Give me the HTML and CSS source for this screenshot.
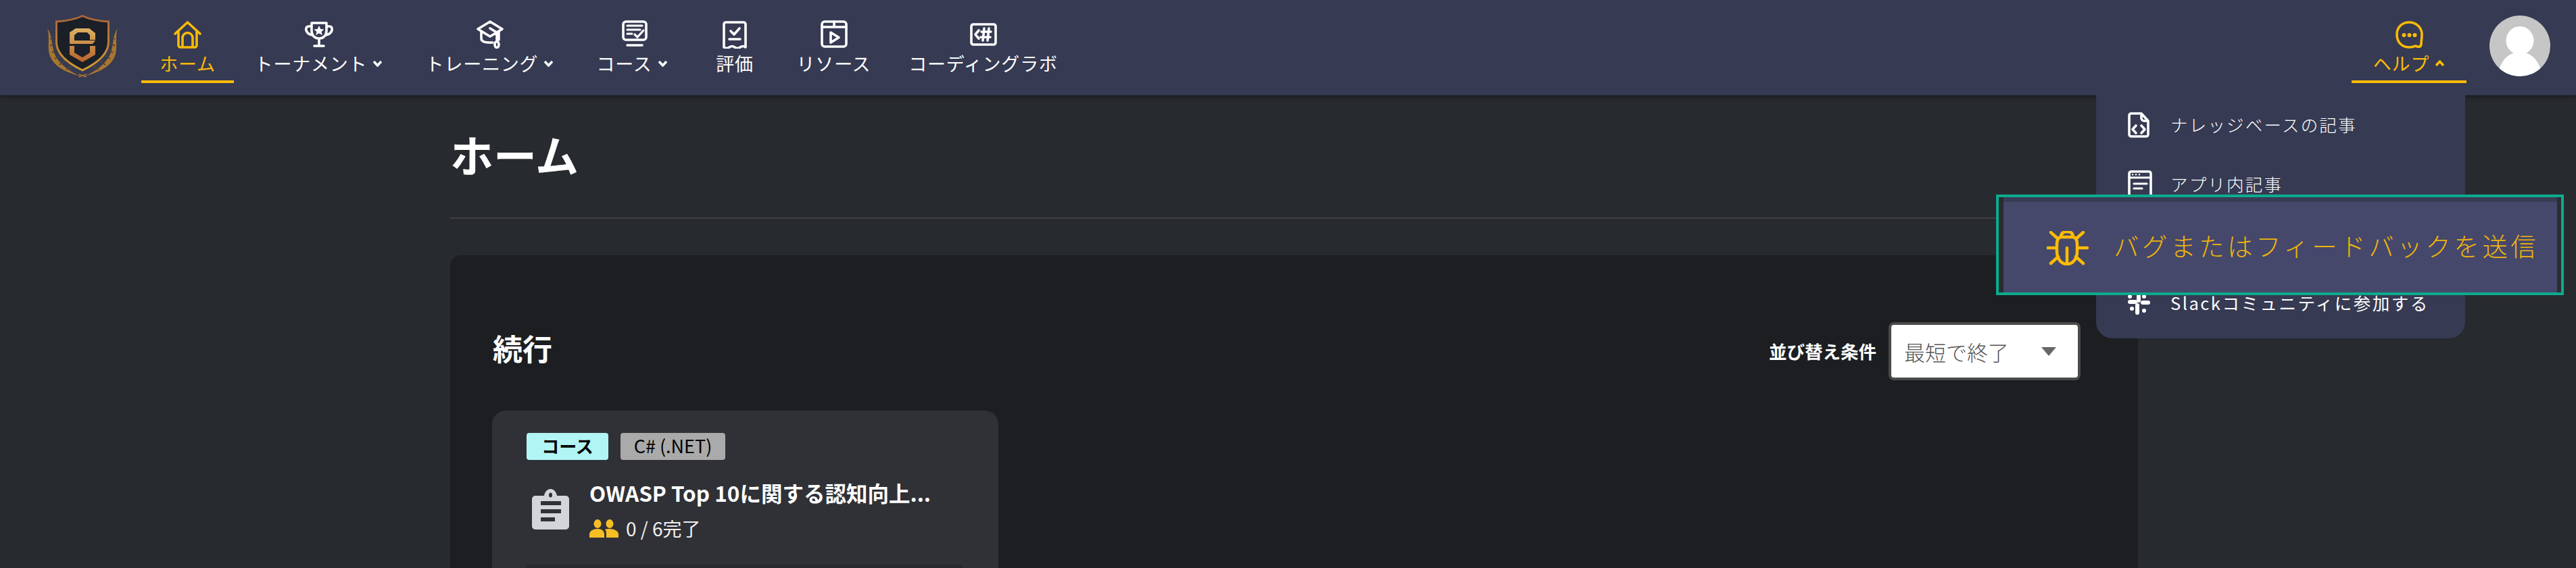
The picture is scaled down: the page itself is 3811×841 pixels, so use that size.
FILE: index.html
```html
<!DOCTYPE html>
<html lang="ja">
<head>
<meta charset="utf-8">
<title>ホーム</title>
<link rel="stylesheet" href="styles.css">
</head>
<body>
<header class="topbar">
  <svg class="logo" width="106" height="94" viewBox="0 0 106 94" fill="none">
    <defs>
      <linearGradient id="gold" x1="0" y1="0" x2="0" y2="1"><stop offset="0" stop-color="#dcb060"/><stop offset="1" stop-color="#b8642c"/></linearGradient>
      <linearGradient id="rim" x1="0" y1="0" x2="0" y2="1"><stop offset="0" stop-color="#a8643a"/><stop offset="1" stop-color="#d09a30"/></linearGradient>
    </defs>
    <path d="M14.500 10 C28 9 44 6 53 1.500 C62 6 78 9 91.500 10 V40 C91.500 58 74 72 53 82 C32 72 14.500 58 14.500 40 Z" fill="#1b1f28" stroke="url(#rim)" stroke-width="3"/>
    <path d="M34 43 V26 L43 20 H63 L72 27 V37 H64 V30 L60 26 H46 L41 30 V38 H72 L68 43 Z M34 46 H41 V56 L53 63 L64 56 V46 H72 V59 L53 70 L34 59 Z" fill="url(#gold)"/>
    <path d="M1 20 C8 30 7 40 10 52 C13 66 26 80 50 91 C28 85 9 76 4 58 C1 46 5 32 1 20 Z" fill="#a8752f"/>
    <path d="M105 20 C98 30 99 40 96 52 C93 66 80 80 56 91 C78 85 97 76 102 58 C105 46 101 32 105 20 Z" fill="#a8752f"/>
    <path d="M5 36 L10 33 M5 46 L12 42 M8 56 L15 51 M12 65 L20 60 M19 74 L27 68 M29 81 L37 76 M101 36 L96 33 M101 46 L94 42 M98 56 L91 51 M94 65 L86 60 M87 74 L79 68 M77 81 L69 76" stroke="#4f4438" stroke-width="1.800"/>
    <path d="M47 92 L59 88 M59 92 L47 88" stroke="#a8752f" stroke-width="1.500"/>
  </svg>
  <nav class="nav">
    <a class="nav-item active nav-home">
      <svg class="ico" width="41" height="41" viewBox="0 0 41 41"><path d="M2 19 L20.500 2 L39 19 M7 15 V36 a3 3 0 0 0 3 3 H31 a3 3 0 0 0 3-3 V15 M13 39 V25 a7.500 7.500 0 0 1 15 0 V39"/></svg>
      <span class="nav-label">ホーム</span>
    </a>
    <a class="nav-item nav-tour">
      <svg class="ico" width="42" height="38" viewBox="0 0 42 38"><path d="M10 2 H32 V13 C32 21 27 25 21 25 C15 25 10 21 10 13 Z M10 7 H6 C2 7 1.500 10 2 13 C3 17 7 19 11 20 M32 7 H36 C40 7 40.500 10 40 13 C39 17 35 19 31 20 M21 25 V36 M14 36 H28"/><polygon class="fill" points="21,6 23.300,11 28.500,11.500 24.500,15 25.800,20 21,17.300 16.200,20 17.500,15 13.500,11.500 18.700,11"/></svg>
      <span class="nav-label">トーナメント<svg class="chev" width="15" height="10" viewBox="0 0 15 10"><path d="M2 2 L7.500 8 L13 2"/></svg></span>
    </a>
    <a class="nav-item nav-train">
      <svg class="ico" width="40" height="42" viewBox="0 0 40 42"><path d="M20 2 L38 13 L20 24 L2 13 Z M7 17 V27 C7 31 12 33 20 33 H24 M33 17 V29 M20 12 L30 18 V31"/><ellipse cx="30" cy="36" rx="3" ry="4.500"/></svg>
      <span class="nav-label">トレーニング<svg class="chev" width="15" height="10" viewBox="0 0 15 10"><path d="M2 2 L7.500 8 L13 2"/></svg></span>
    </a>
    <a class="nav-item nav-course">
      <svg class="ico ico-shift" width="38" height="39" viewBox="0 0 38 39"><rect x="2" y="2" width="34" height="27" rx="4"/><path class="thin" d="M8 8 H30 M8 14 H27 M8 20 H15 M19 21 L23 25 L32 15"/><path d="M8 37 H30"/></svg>
      <span class="nav-label">コース<svg class="chev" width="15" height="10" viewBox="0 0 15 10"><path d="M2 2 L7.500 8 L13 2"/></svg></span>
    </a>
    <a class="nav-item nav-eval">
      <svg class="ico" width="36" height="41" viewBox="0 0 36 41"><path d="M2 39 V5 a3 3 0 0 1 3-3 H31 a3 3 0 0 1 3 3 V39 q-4 -3 -8 0 t-8 0 t-8 0 t-8 0 M12 15 L17 20 L25 11 M10 27 H26"/></svg>
      <span class="nav-label">評価</span>
    </a>
    <a class="nav-item nav-res">
      <svg class="ico" width="40" height="41" viewBox="0 0 40 41"><rect x="2" y="2" width="36" height="37" rx="4"/><path d="M2 10 H38 M20 2 V10 M15 18 L27 25.500 L15 33 Z"/></svg>
      <span class="nav-label">リソース</span>
    </a>
    <a class="nav-item nav-code">
      <svg class="ico" width="40" height="34" viewBox="0 0 40 34"><rect x="2" y="2" width="36" height="30" rx="3"/><path d="M13 11 L8 17 L13 23 M21 8 L19 26 M28 8 L26 26 M17 13 H31 M16 21 H30"/></svg>
      <span class="nav-label">コーディングラボ</span>
    </a>
  </nav>
  <a class="nav-item active nav-help">
    <svg class="ico" width="41" height="41" viewBox="0 0 41 41"><path d="M20 2 C31 2 39 10 39 20 C39 26 38 30 38 34 C38 39 33 39 30 37 C27 38 24 39 20 39 C9 39 2 31 2 20 C2 10 9 2 20 2 Z"/><circle class="fill" cx="12.500" cy="21" r="3"/><circle class="fill" cx="20.500" cy="21" r="3"/><circle class="fill" cx="28.500" cy="21" r="3"/></svg>
    <span class="nav-label">ヘルプ<svg class="chev" width="15" height="10" viewBox="0 0 15 10"><path d="M2 8 L7.500 2 L13 8"/></svg></span>
  </a>
  <div class="avatar">
    <svg width="90" height="90" viewBox="0 0 90 90"><ellipse class="head" cx="45" cy="37" rx="20.500" ry="21"/><path class="head" d="M14 80 C20 62 32 54 45 54 C58 54 70 62 76 80 C68 87 56 90 45 90 C34 90 22 87 14 80 Z"/></svg>
  </div>
</header>

<main class="page">
  <h1 class="page-title">ホーム</h1>
  <hr class="page-rule">
  <section class="panel">
    <div class="panel-head">
      <h2 class="panel-title">続行</h2>
      <div class="sorter">
        <span class="sort-label">並び替え条件</span>
        <div class="select"><span>最短で終了</span><i class="select-arrow"></i></div>
      </div>
    </div>
    <article class="card">
      <div class="tags">
        <span class="tag tag-course">コース</span>
        <span class="tag tag-lang">C# (.NET)</span>
      </div>
      <div class="card-body">
        <svg class="clip" width="55" height="60" viewBox="0 0 55 60"><path d="M5 10 H18 C19 4 23 0 27.500 0 C32 0 36 4 37 10 H50 a5 5 0 0 1 5 5 V55 a5 5 0 0 1-5 5 H5 a5 5 0 0 1-5-5 V15 a5 5 0 0 1 5-5 Z" fill="#d2d5d9"/><ellipse cx="27.500" cy="9" rx="2.500" ry="3.500" fill="#303136"/><rect x="13" y="18" width="30" height="6" fill="#303136"/><rect x="13" y="30" width="30" height="6" fill="#303136"/><rect x="13" y="42" width="21" height="6" fill="#303136"/></svg>
        <div class="card-text">
          <div class="card-title">OWASP Top 10に関する認知向上...</div>
          <div class="card-meta">
            <svg width="43" height="27" viewBox="0 0 43 27"><ellipse cx="12" cy="6.500" rx="5.500" ry="6.500" fill="#f6bf26"/><ellipse cx="30" cy="6.500" rx="5.500" ry="6.500" fill="#f6bf26"/><path d="M0 27 V22 C0 17 6 14 12 14 C18 14 22 17 22 22 V27 Z M25 27 V20 C25 18 24 16 23 15 C25 14 28 14 30 14 C36 14 43 17 43 22 V27 Z" fill="#f6bf26"/></svg>
            <span>0 / 6完了</span>
          </div>
        </div>
      </div>
      <div class="card-inner"></div>
    </article>
  </section>
</main>

<div class="help-menu">
  <a class="help-row">
    <svg class="ico" width="32" height="38" viewBox="0 0 32 38"><path d="M6 2 H20 L30 13 V33 a3 3 0 0 1-3 3 H5 a3 3 0 0 1-3-3 V5 a3 3 0 0 1 3-3 Z M20 3 V9 a4 4 0 0 0 4 4 H29 M12 20 L7 25.500 L12 31 M20 20 L25 25.500 L20 31"/></svg>
    <span>ナレッジベースの記事</span>
  </a>
  <a class="help-row">
    <svg class="ico" width="36" height="42" viewBox="0 0 36 42"><rect x="2" y="2" width="32" height="38" rx="3"/><path class="thin" d="M2 11 H34 M9 20 H28 M9 27 H21"/><circle class="fill" cx="7" cy="6.500" r="1.300"/><circle class="fill" cx="12" cy="6.500" r="1.300"/><circle class="fill" cx="17" cy="6.500" r="1.300"/></svg>
    <span>アプリ内記事</span>
  </a>
  <div class="help-row"></div>
  <a class="help-row help-slack">
    <svg width="33" height="33" viewBox="0 0 33 33" fill="#fff"><rect x="0" y="11" width="14" height="6" rx="3"/><rect x="19" y="12" width="14" height="6" rx="3"/><rect x="11" y="16" width="6" height="17" rx="3"/><rect x="13" y="0" width="6" height="15" rx="3"/><circle cx="3" cy="6" r="3"/><circle cx="24" cy="6" r="3"/><circle cx="6" cy="24" r="3"/><circle cx="24" cy="27" r="3"/></svg>
    <span>Slackコミュニティに参加する</span>
  </a>
</div>

<div class="spotlight">
  <div class="spotlight-inner">
    <svg class="ico bug" width="62" height="51" viewBox="0 0 62 51"><path d="M15 20 C15 12 18 9 22 9 H38 C42 9 45 12 45 20 V30 C45 42 38 49 30 49 C22 49 15 42 15 30 Z M21 9 C21 3 25 1 30 1 C35 1 39 3 39 9 M6 2 L16 11 M54 2 L44 11 M1 25 H15 M45 25 H60 M6 48 L17 38 M54 48 L43 38 M30 25 V48"/></svg>
    <span class="spotlight-text">バグまたはフィードバックを送信</span>
  </div>
</div>
</body>
</html>
```

FILE: styles.css
```css
* { box-sizing: border-box; }
html, body { margin: 0; height: 841px; overflow: hidden; }
body {
  position: relative;
  background: #272a2e;
  color: #fff;
  font-family: "Noto Sans CJK JP", "Noto Sans", sans-serif;
}
a { color: inherit; text-decoration: none; }

.topbar {
  height: 141px;
  background: #363a52;
  display: flex;
  align-items: flex-start;
  box-shadow: 0 3px 6px rgba(0, 0, 0, .35);
  padding-left: 69px;
  position: relative;
}
.logo { margin-top: 22px; flex: none; margin-right: 34px; }
.nav { display: flex; flex: 1; }
.nav-item {
  display: flex;
  flex-direction: column;
  align-items: center;
  height: 123px;
  padding: 31px 29px 0;
  border-bottom: 4px solid transparent;
  color: #fff;
  flex: none;
  position: relative;
}
.nav-label {
  position: absolute;
  top: 76px;
  font-size: 27px;
  font-weight: 400;
  line-height: 36px;
  letter-spacing: .8px;
  white-space: nowrap;
  display: flex;
  align-items: center;
}
.chev { margin-left: 8px; fill: none; stroke: currentColor; stroke-width: 3.500; flex: none; }
.ico { fill: none; stroke: currentColor; stroke-width: 3.600; stroke-linejoin: round; stroke-linecap: round; flex: none; display: block; }
.ico .fill { fill: currentColor; stroke: none; }
.ico .thin { stroke-width: 3.200; }
.ico-shift { margin-left: 7px; }
.active { color: #fdbb06; }
.nav-item.active { border-bottom-color: #fdbb06; }

.nav-home { width: 137px; }
.nav-tour { width: 243px; margin-left: 4px; padding-top: 32px; }
.nav-train { width: 245px; margin-left: 9px; padding-top: 30px; }
.nav-course { width: 164px; margin-left: 6px; padding-top: 30px; }
.nav-eval { width: 110px; margin-left: 15px; }
.nav-res { width: 161px; margin-left: 11px; padding-top: 30px; }
.nav-code { width: 275px; margin-left: 3px; padding-top: 34px; }
.nav-help { width: 170px; margin-right: 34px; }
.avatar { width: 90px; height: 90px; margin-top: 23px; margin-right: 38px; border-radius: 50%; background: #c6c6c6; overflow: hidden; flex: none; }
.avatar svg { display: block; }
.head { fill: #fff; }

.page { width: 2497px; margin-left: 666px; }
.page-title {
  margin: 0;
  padding-top: 41px;
  height: 181px;
  font-size: 64px;
  line-height: 90px;
  font-weight: 700;
}
.page-rule { margin: 0 0 54px; height: 2px; border: 0; background: #3e4044; }
.panel { background: #1c1e21; border-radius: 16px 16px 0 0; padding: 0 85px 0 63px; height: 463px; }
.panel-head { display: flex; justify-content: space-between; align-items: center; height: 230px; padding-top: 54px; }
.panel-title { margin: -11px 0 0; font-size: 44px; line-height: 60px; font-weight: 700; }
.sorter { display: flex; align-items: center; gap: 18px; }
.sort-label { font-size: 26.500px; font-weight: 700; line-height: 40px; }
.select {
  width: 284px;
  height: 86px;
  border: 4px solid #4a4a4a;
  border-radius: 8px;
  background: #fff;
  color: #555;
  font-size: 31px;
  font-weight: 300;
  display: flex;
  align-items: center;
  justify-content: space-between;
  padding: 0 32px 0 19px;
}
.select-arrow { width: 0; height: 0; border: 11px solid transparent; border-top: 13px solid #666; border-bottom: 0; }
.card { width: 749px; height: 233px; margin-left: -1px; background: #303136; border-radius: 20px 20px 0 0; padding: 33px 52px 0 51px; overflow: hidden; }
.tags { display: flex; gap: 18px; }
.tag { height: 40px; border-radius: 4px; color: #000; font-size: 26px; line-height: 38px; display: block; text-align: center; }
.tag-course { width: 121px; background: #b2f5f5; font-weight: 700; }
.tag-lang { width: 155px; background: #aaaaaa; font-size: 27px; }
.card-body { display: flex; align-items: flex-start; margin-top: 43px; height: 112px; }
.clip { margin: 0 30px 0 8px; flex: none; }
.card-text { margin-top: -18px; }
.card-title { font-size: 31.500px; line-height: 46px; font-weight: 700; white-space: nowrap; }
.card-meta { display: flex; align-items: center; gap: 11px; margin-top: 11px; font-size: 28px; line-height: 38px; color: #f0f0f0; }
.card-meta svg { display: block; }
.card-inner { height: 5px; background: #27292d; border-radius: 16px 16px 0 0; }

.help-menu {
  position: absolute;
  top: 141px;
  left: 3101px;
  width: 546px;
  height: 360px;
  background: #363a52;
  border-radius: 0 0 24px 24px;
}
.help-row {
  display: flex;
  align-items: center;
  height: 88px;
  padding-left: 47px;
  font-size: 25.500px;
  font-weight: 300;
  letter-spacing: 2.200px;
  position: relative;
}
.help-row span { position: absolute; left: 110px; margin-top: -3px; white-space: nowrap; }
.help-slack span { margin-top: -4px; font-weight: 400; letter-spacing: 2.500px; }

.spotlight {
  position: absolute;
  top: 288px;
  left: 2953px;
  width: 840px;
  height: 149px;
  border: 4px solid #0cab8e;
  background: #2a2c30;
  padding: 0 6px 0 7px;
}
.spotlight-inner {
  height: 100%;
  background: #45486a;
  border-top: 7px solid #393c54;
  color: #fdbb06;
  display: flex;
  align-items: center;
  padding-left: 64px;
  white-space: nowrap;
}
.spotlight-text {
  font-size: 37.500px;
  font-weight: 300;
  letter-spacing: 4.500px;
  color: #f0b40c;
  margin-top: -8px;
}
.bug { stroke-width: 4.500; margin-right: 37px; margin-top: 2px; }
```
